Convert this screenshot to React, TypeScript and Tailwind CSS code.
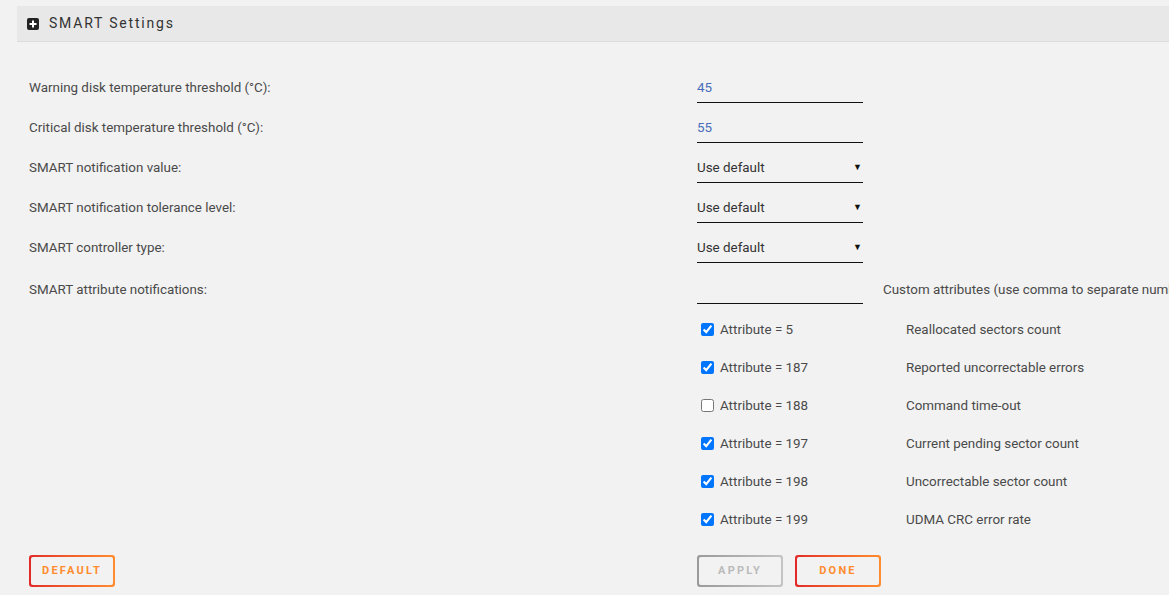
import React from "react";

const font = { fontFamily: "Roboto, 'Liberation Sans', sans-serif" };

const fields = [
  { label: "Warning disk temperature threshold (°C):", value: "45", type: "text" },
  { label: "Critical disk temperature threshold (°C):", value: "55", type: "text" },
  { label: "SMART notification value:", value: "Use default", type: "select" },
  { label: "SMART notification tolerance level:", value: "Use default", type: "select" },
  { label: "SMART controller type:", value: "Use default", type: "select" },
];

const attributes = [
  { id: 5, name: "Reallocated sectors count", on: true },
  { id: 187, name: "Reported uncorrectable errors", on: true },
  { id: 188, name: "Command time-out", on: false },
  { id: 197, name: "Current pending sector count", on: true },
  { id: 198, name: "Uncorrectable sector count", on: true },
  { id: 199, name: "UDMA CRC error rate", on: true },
];

function GradientButton({ text, disabled }: { text: string; disabled?: boolean }) {
  return (
    <div
      className={
        disabled
          ? "w-[86px] h-[32px] p-[2px] rounded-[3px] bg-gradient-to-r from-[#9a9a9a] to-[#c4c4c4]"
          : "w-[86px] h-[32px] p-[2px] rounded-[3px] bg-gradient-to-r from-[#e22828] to-[#ff8c2f]"
      }
    >
      <div
        className={
          disabled
            ? "w-full h-full rounded-[2px] bg-[#f2f2f2] flex items-center justify-center text-[11px] font-bold tracking-[2.2px] text-[#bbbbbb]"
            : "w-full h-full rounded-[2px] bg-[#f2f2f2] flex items-center justify-center text-[11px] font-bold tracking-[2.2px] text-[#ff8c2f]"
        }
      >
        {text}
      </div>
    </div>
  );
}

export default function App() {
  return (
    <div className="min-h-screen bg-[#f2f2f2] text-[13.4px] text-[#4a4a4a] overflow-hidden" style={font}>
      <div className="pt-[6px]">
        {/* section header */}
        <div className="ml-[17px] h-[36px] bg-[#e8e8e8] border-b border-[#dcdcdc] flex items-center pl-[10px]">
          <svg width="12" height="12" viewBox="0 0 12 12">
            <rect x="0" y="0" width="12" height="12" rx="2" fill="#222" />
            <rect x="5" y="2.5" width="2" height="7" fill="#fff" />
            <rect x="2.5" y="5" width="7" height="2" fill="#fff" />
          </svg>
          <span className="ml-[10px] text-[14px] tracking-[1.8px] text-[#333]">SMART Settings</span>
        </div>
      </div>

      <div className="pl-[29px] pt-[30px]">
        {fields.map((f) => (
          <div key={f.label} className="flex items-center pb-[9px]">
            <div className="w-[668px] shrink-0 pt-[2px]">{f.label}</div>
            <div className="w-[166px] shrink-0 h-[31px] pt-[2px] border-b border-[#111] flex items-center justify-between">
              <span className={f.type === "text" ? "text-[#486dba]" : "text-[#333]"}>{f.value}</span>
              {f.type === "select" && <span className="text-[9px] text-[#111] mr-[1px]">▼</span>}
            </div>
          </div>
        ))}

        <div className="flex items-start mt-[1px] pb-[6px]">
          <div className="w-[668px] shrink-0 pt-[7px]">SMART attribute notifications:</div>
          <div className="w-[166px] shrink-0 h-[31px] border-b border-[#111]" />
          <div className="ml-[20px] shrink-0 whitespace-nowrap pt-[7px]">Custom attributes (use comma to separate numbers):</div>
        </div>

        <div className="ml-[668px] pt-[1px]">
          {attributes.map((a) => (
            <div key={a.id} className="flex items-center h-[38px]">
              <div className="w-[209px] flex items-center">
                <input
                  type="checkbox"
                  checked={a.on}
                  readOnly
                  className="w-[13px] h-[13px] ml-[4px] mr-[6px] accent-[#0075ff]"
                />
                <span>Attribute = {a.id}</span>
              </div>
              <div>{a.name}</div>
            </div>
          ))}
        </div>

        <div className="flex mt-[16px]">
          <div className="w-[668px] shrink-0">
            <GradientButton text="DEFAULT" />
          </div>
          <div className="flex gap-[12px]">
            <GradientButton text="APPLY" disabled />
            <GradientButton text="DONE" />
          </div>
        </div>
      </div>
    </div>
  );
}
